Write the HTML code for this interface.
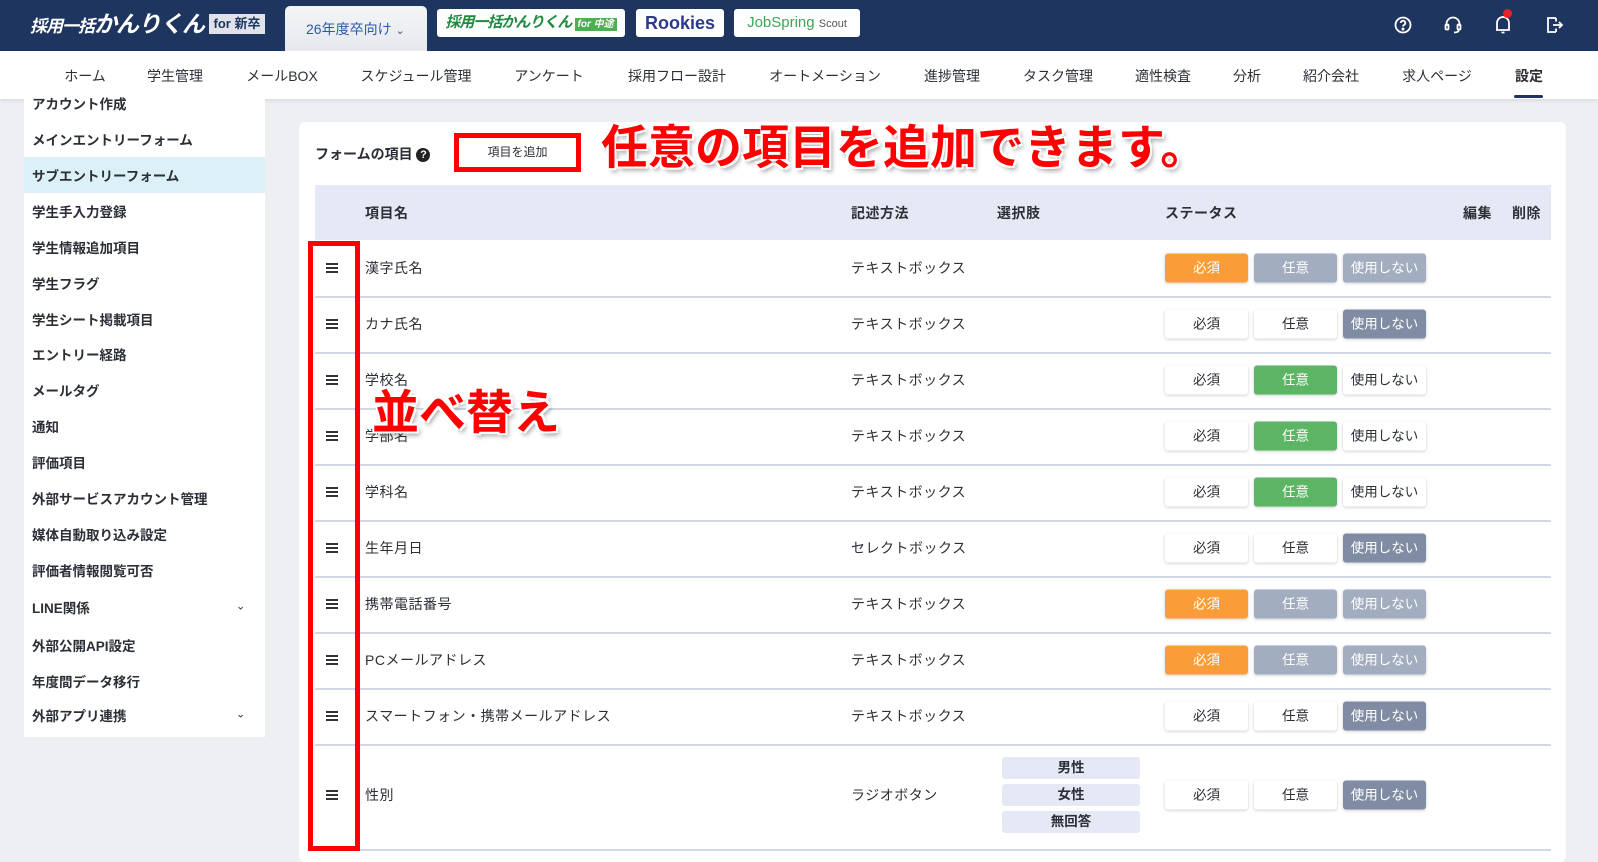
<!DOCTYPE html>
<html><head><meta charset="utf-8"><style>
*{box-sizing:border-box;margin:0;padding:0}
body{width:1598px;height:851px;overflow:hidden;background:#eeeff2;font-family:"Liberation Sans","Noto Sans CJK JP",sans-serif;color:#2b2f36;position:relative}
.hdr{position:absolute;left:0;top:0;width:1598px;height:51px;background:#1e3560}
.abs{position:absolute}
.nav{position:absolute;left:0;top:51px;width:1598px;height:48px;background:#fff;box-shadow:0 2px 3px rgba(0,0,0,.08)}
.nav span{position:absolute;top:15px;font-size:14px;transform:translateX(-50%);white-space:nowrap;color:#2b2f36}
.side{position:absolute;left:24px;top:99px;width:241px;height:638px;background:#fff}
.side div{position:absolute;left:8px;font-size:13.5px;font-weight:bold;white-space:nowrap;transform:translateY(-50%)}
.panel{position:absolute;left:299px;top:122px;width:1267px;height:740px;background:#fff;border-radius:6px}
.th{position:absolute;left:315px;top:185px;width:1236px;height:55px;background:#e4e9f5}
.th span,.cell{position:absolute;font-size:14px;white-space:nowrap;transform:translateY(-50%);letter-spacing:.5px}
.th span{top:28px;font-weight:bold}
.line{position:absolute;left:315px;width:1236px;height:1.5px;background:#cfd8e6}
.btn{position:absolute;width:83px;height:29px;border-radius:3px;font-size:13.5px;text-align:center;line-height:29px;box-shadow:0 1px 3px rgba(0,0,0,.2);transform:translateY(-50%)}
.w{background:#fff;color:#2b2f36}.o{background:#fa9d38;color:#fff}.g{background:#a2adbf;color:#fff}.d{background:#7f8ca3;color:#fff}.gr{background:#5cb565;color:#fff}
.hb{position:absolute;left:326px;width:12px;height:10px;transform:translateY(-50%);border-top:2px solid #333;border-bottom:2px solid #333}
.hb:after{content:"";position:absolute;left:0;right:0;top:2px;height:2px;background:#333}
.big{position:absolute;color:#f00;font-weight:bold;font-size:47px;white-space:nowrap;text-shadow:2px 2px 0 #fff,-2px -2px 0 #fff,2px -2px 0 #fff,-2px 2px 0 #fff,3px 4px 5px rgba(0,0,0,.35)}
.chip{position:absolute;left:1002px;width:138px;height:22px;background:#e4e9f5;border-radius:3px;font-size:13.5px;text-align:center;line-height:22px;font-weight:bold}
.logo{position:absolute;background:#fff;border-radius:3px;height:28px;top:9px;font-weight:bold;text-align:center;line-height:28px;white-space:nowrap;overflow:hidden}
</style></head><body>
<div class="hdr"></div>
<div class="abs" style="left:30px;top:11px;height:26px;color:#fff;font-weight:bold;font-style:italic;font-size:17px;white-space:nowrap;line-height:26px;letter-spacing:-1px">採用一括<span style="font-size:23px">かんりくん</span></div>
<div class="abs" style="left:209px;top:14px;width:56px;height:20px;background:#dfe2e8;color:#1e3560;font-size:13px;font-weight:bold;line-height:20px;text-align:center">for 新卒</div>
<div class="abs" style="left:285px;top:6px;width:142px;height:45px;background:linear-gradient(#f4f5f7,#e6e8ec);border-radius:5px 5px 0 0;color:#2c5aa8;font-size:14px;line-height:47px;padding-left:21px">26年度卒向け <span style="font-size:11px;color:#555">&#8964;</span></div>
<div class="logo" style="left:437px;width:188px;color:#1e8a3c;font-size:15px;font-style:italic;letter-spacing:-1px">採用一括かんりくん <span style="background:#4caf50;color:#fff;font-size:10px;padding:1px 3px;letter-spacing:0">for 中途</span></div>
<div class="logo" style="left:636px;width:88px;color:#2b3a8c;font-size:18px">Rookies</div>
<div class="logo" style="left:734px;width:126px;color:#3aa55a;font-size:15px;font-weight:normal">JobSpring <span style="font-size:11px;color:#555">Scout</span></div>
<svg class="abs" style="left:1392px;top:14px" width="22" height="22" viewBox="0 0 22 22" fill="none" stroke="#fff" stroke-width="1.8"><circle cx="11" cy="11" r="7.5"/><path d="M8.7 9a2.3 2.3 0 1 1 3.2 2.1c-.6.3-.9.7-.9 1.4"/><circle cx="11" cy="15" r=".6" fill="#fff"/></svg>
<svg class="abs" style="left:1442px;top:14px" width="22" height="22" viewBox="0 0 22 22" fill="none" stroke="#fff" stroke-width="1.8"><path d="M4.5 12V10a6.5 6.5 0 0 1 13 0v2"/><rect x="3.5" y="10.5" width="3" height="5" rx="1"/><rect x="15.5" y="10.5" width="3" height="5" rx="1"/><path d="M17 15.5c0 2-2 3-5 3"/></svg>
<svg class="abs" style="left:1492px;top:12px" width="22" height="24" viewBox="0 0 22 24" fill="none" stroke="#fff" stroke-width="1.8"><path d="M5 18V11a6 6 0 0 1 12 0v7H4M9.5 20.5h3"/></svg>
<div class="abs" style="left:1503px;top:9px;width:9px;height:9px;border-radius:50%;background:#e8202a"></div>
<svg class="abs" style="left:1543px;top:14px" width="22" height="22" viewBox="0 0 22 22" fill="none" stroke="#fff" stroke-width="1.8"><path d="M13 4H5v14h8M13 7.5V4M13 14.5V18M10 11h9M16 8l3 3-3 3"/></svg>
<div class="nav">
<span style="left:85px">ホーム</span><span style="left:175px">学生管理</span><span style="left:282px">メールBOX</span><span style="left:416px">スケジュール管理</span><span style="left:549px">アンケート</span><span style="left:677px">採用フロー設計</span><span style="left:825px">オートメーション</span><span style="left:952px">進捗管理</span><span style="left:1058px">タスク管理</span><span style="left:1163px">適性検査</span><span style="left:1247px">分析</span><span style="left:1331px">紹介会社</span><span style="left:1437px">求人ページ</span><span style="left:1529px;font-weight:bold">設定</span>
<div style="position:absolute;left:1514px;top:44px;width:29px;height:3px;background:#1e3560;border-radius:2px"></div>
</div>
<div class="side">
<div style="top:4px">アカウント作成</div>
<div style="left:0;top:58px;width:241px;height:36px;background:#dcf0f8;transform:none"></div>
<div style="top:40px">メインエントリーフォーム</div>
<div style="top:76px">サブエントリーフォーム</div>
<div style="top:112px">学生手入力登録</div>
<div style="top:148px">学生情報追加項目</div>
<div style="top:184px">学生フラグ</div>
<div style="top:220px">学生シート掲載項目</div>
<div style="top:255px">エントリー経路</div>
<div style="top:291px">メールタグ</div>
<div style="top:327px">通知</div>
<div style="top:363px">評価項目</div>
<div style="top:399px">外部サービスアカウント管理</div>
<div style="top:435px">媒体自動取り込み設定</div>
<div style="top:471px">評価者情報閲覧可否</div>
<div style="top:508px">LINE関係</div><div style="top:507px;left:212px;font-weight:normal;font-size:11px">&#8964;</div>
<div style="top:546px">外部公開API設定</div>
<div style="top:582px">年度間データ移行</div>
<div style="top:616px">外部アプリ連携</div><div style="top:615px;left:212px;font-weight:normal;font-size:11px">&#8964;</div>
</div>
<div class="panel"></div>
<div class="abs" style="left:315px;top:144px;font-size:14px;font-weight:bold;white-space:nowrap">フォームの項目 <span style="display:inline-block;width:14px;height:14px;border-radius:50%;background:#222;color:#fff;font-size:11px;line-height:14px;text-align:center;vertical-align:1px">?</span></div>
<div class="abs" style="left:454px;top:133px;width:127px;height:39px;border:5px solid #f00;font-size:12px;text-align:center;line-height:29px">項目を追加</div>
<div class="big" style="left:601px;top:121px;line-height:54px">任意の項目を追加できます。</div>
<div class="th"><span style="left:50px">項目名</span><span style="left:536px">記述方法</span><span style="left:682px">選択肢</span><span style="left:850px">ステータス</span><span style="left:1148px">編集</span><span style="left:1197px">削除</span></div>
<div id="rows"></div>
<script>
var rows=[["漢字氏名","o","g","g"],["カナ氏名","w","w","d"],["学校名","w","gr","w"],["学部名","w","gr","w"],["学科名","w","gr","w"],["生年月日","w","w","d"],["携帯電話番号","o","g","g"],["PCメールアドレス","o","g","g"],["スマートフォン・携帯メールアドレス","w","w","d"]];
var h="",yy=240;
rows.forEach(function(r,i){var c=yy+28;var m=i==5?"セレクトボックス":"テキストボックス";
h+='<div class="hb" style="top:'+c+'px"></div><div class="cell" style="left:365px;top:'+c+'px">'+r[0]+'</div><div class="cell" style="left:851px;top:'+c+'px">'+m+'</div>'+
'<div class="btn '+r[1]+'" style="left:1165px;top:'+c+'px">必須</div><div class="btn '+r[2]+'" style="left:1254px;top:'+c+'px">任意</div><div class="btn '+r[3]+'" style="left:1343px;top:'+c+'px">使用しない</div>';
yy+=56;h+='<div class="line" style="top:'+yy+'px"></div>';});
var c=795;
h+='<div class="hb" style="top:'+c+'px"></div><div class="cell" style="left:365px;top:'+c+'px">性別</div><div class="cell" style="left:851px;top:'+c+'px">ラジオボタン</div><div class="btn w" style="left:1165px;top:'+c+'px">必須</div><div class="btn w" style="left:1254px;top:'+c+'px">任意</div><div class="btn d" style="left:1343px;top:'+c+'px">使用しない</div><div class="chip" style="top:757px">男性</div><div class="chip" style="top:784px">女性</div><div class="chip" style="top:811px">無回答</div><div class="line" style="top:849px"></div>';
document.getElementById("rows").innerHTML=h;
</script>
<div class="abs" style="left:308px;top:241px;width:52px;height:610px;border:5px solid #f00"></div>
<div class="big" style="left:372px;top:386px;line-height:54px">並べ替え</div>
</body></html>
